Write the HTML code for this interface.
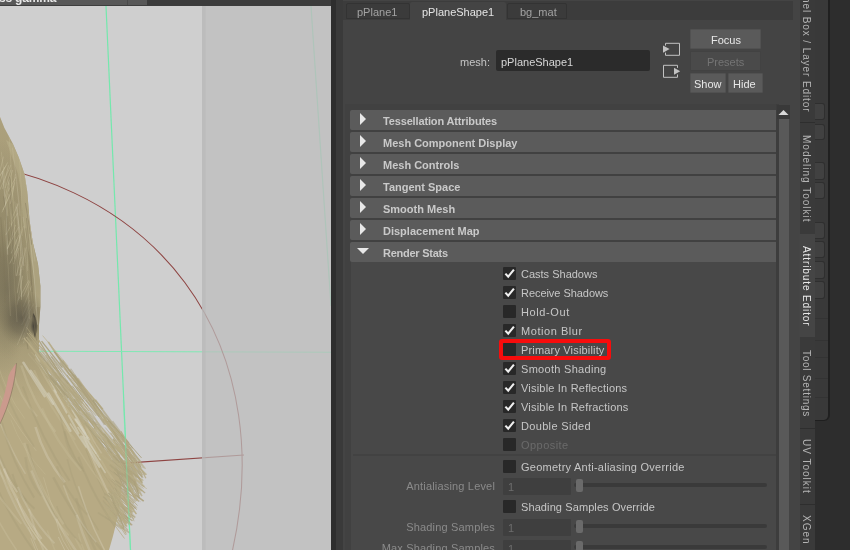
<!DOCTYPE html>
<html><head><meta charset="utf-8">
<style>
*{margin:0;padding:0;box-sizing:border-box}
html,body{width:850px;height:550px;overflow:hidden;background:#444;font-family:"Liberation Sans",sans-serif}
.a{position:absolute}
.t,.cl,.hdr .lab,.vt{filter:grayscale(1)}
.t{position:absolute;white-space:nowrap;font-size:11px;line-height:13px}
.hdr{position:absolute;left:350px;width:426px;height:20px;background:#5b5b5b;border-radius:2px 0 0 2px}
.hdr .tri{position:absolute;left:10px;top:3px;width:0;height:0;border-top:6px solid transparent;border-bottom:6px solid transparent;border-left:6.5px solid #e8e8e8}
.hdr .tri.dn{left:7px;top:6px;border-left:6px solid transparent;border-right:6px solid transparent;border-top:6px solid #e8e8e8;border-bottom:0}
.hdr .lab{position:absolute;left:33px;top:5px;font-size:11px;line-height:13px;font-weight:bold;color:#c9c9c9;white-space:nowrap}
.cb{position:absolute;left:503px;width:13px;height:13px;background:#282828;border-radius:1px}
.cb svg{position:absolute;left:0;top:0}
.cl{position:absolute;left:521px;font-size:11px;line-height:13px;color:#c6c6c6;white-space:nowrap}
.vt{position:absolute;left:799px;width:15px;writing-mode:vertical-rl;font-size:10px;line-height:15px;color:#b4b4b4;white-space:nowrap;overflow:hidden}
.nt{position:absolute;left:815px;width:10px;background:#414141;border:1px solid #2f2f2f;border-left:0;border-radius:0 3px 3px 0}
</style></head><body>
<div class="a" style="left:0;top:0;width:331px;height:550px;background:#cfcfcf;overflow:hidden">
    <div class="a" style="left:0;top:0;width:331px;height:6px;background:#3c3c3c"></div>
  <div class="a" style="left:0;top:0;width:147px;height:5px;background:#585858"></div>
  <div class="a" style="left:127px;top:0;width:1px;height:5px;background:#4a4a4a"></div>
  <div class="a" style="left:0;top:5px;width:147px;height:1px;background:#3e3e3e"></div>
  <div class="t" style="left:-1px;top:-8px;font-size:12px;font-weight:bold;color:#e8e8e8;letter-spacing:-0.2px">ss gamma</div>
  <svg class="a" style="left:0;top:0" width="331" height="550" viewBox="0 0 331 550">


    <line x1="311" y1="6" x2="331" y2="306" stroke="#6fdca6" stroke-width="1.2" opacity="0.7"/>
    <line x1="106" y1="6" x2="130.5" y2="550" stroke="#74e8ad" stroke-width="1.2"/>
    <line x1="39" y1="351.3" x2="331" y2="352.3" stroke="#80e8b4" stroke-width="1.1"/>
    <ellipse cx="-224.67" cy="586.25" rx="375.89" ry="509.85" transform="rotate(53.467 -224.67 586.25)" fill="none" stroke="#8e4442" stroke-width="1.05"/>
    <line x1="122" y1="463.3" x2="244" y2="455" stroke="#8e4442" stroke-width="1.2"/>
<defs>
<linearGradient id="hgT" gradientUnits="userSpaceOnUse" x1="0" y1="120" x2="30" y2="400"><stop offset="0" stop-color="#938a6a" stop-opacity="0.3"/><stop offset="0.6" stop-color="#938a6a" stop-opacity="0.75"/><stop offset="0.8" stop-color="#938a6a" stop-opacity="0.45"/><stop offset="1" stop-color="#938a6a" stop-opacity="0"/></linearGradient>
<linearGradient id="hgL" gradientUnits="userSpaceOnUse" x1="0" y1="0" x2="40" y2="0"><stop offset="0" stop-color="#8a8163" stop-opacity="0.6"/><stop offset="1" stop-color="#8a8163" stop-opacity="0"/></linearGradient>
<radialGradient id="dk" cx="0.5" cy="0.5" r="0.5"><stop offset="0" stop-color="#46423a"/><stop offset="0.5" stop-color="#5f5948" stop-opacity="0.8"/><stop offset="1" stop-color="#7d7559" stop-opacity="0"/></radialGradient>
<clipPath id="mc"><path d="M0.0 117.0 L4.4 128.0 L13.0 144.0 L18.6 157.0 L24.5 174.0 L27.3 192.0 L29.5 220.0 L32.7 242.0 L38.0 264.0 L40.4 286.0 L40.4 307.0 L39.0 325.0 L39.0 352.0 L49.0 374.0 L65.0 396.0 L81.0 418.0 L99.0 440.0 L111.0 458.0 L118.0 470.0 L122.0 482.0 L121.0 496.0 L119.0 509.0 L116.0 524.0 L113.0 536.0 L109.0 550.0 L0.0 550.0 Z"/></clipPath>
</defs>
<path d="M0.0 117.0 L4.4 128.0 L13.0 144.0 L18.6 157.0 L24.5 174.0 L27.3 192.0 L29.5 220.0 L32.7 242.0 L38.0 264.0 L40.4 286.0 L40.4 307.0 L39.0 325.0 L39.0 352.0 L49.0 374.0 L65.0 396.0 L81.0 418.0 L99.0 440.0 L111.0 458.0 L118.0 470.0 L122.0 482.0 L121.0 496.0 L119.0 509.0 L116.0 524.0 L113.0 536.0 L109.0 550.0 L0.0 550.0 Z" fill="#b7aa84"/>
<g clip-path="url(#mc)">
<rect x="0" y="100" width="60" height="320" fill="url(#hgT)"/>
<radialGradient id="lg" cx="0.5" cy="0.5" r="0.5"><stop offset="0" stop-color="#877e60" stop-opacity="0.75"/><stop offset="1" stop-color="#877e60" stop-opacity="0"/></radialGradient>
<ellipse cx="0" cy="260" rx="34" ry="120" fill="url(#lg)"/>
<ellipse cx="8" cy="290" rx="22" ry="70" fill="url(#dk)" opacity="0.3"/>
<path d="M13 144 L18.6 157 L24.5 174 L27.3 192 L29.5 220 L32.7 242 L38 264 L40.4 286 L40.4 307 L36 307 L35 286 L32 264 L26 242 L23 220 L21 192 L18 174 L12 157 L6 140 Z" fill="#c6bc98" opacity="0.35"/>
<path d="M18.7 226.9 L7.3 248.4" stroke="#d2c9aa" stroke-width="0.8" opacity="0.4"/>
<path d="M19.9 236.3 L14.4 258.5" stroke="#d2c9aa" stroke-width="0.8" opacity="0.4"/>
<path d="M21.2 257.1 L16.4 275.9" stroke="#d2c9aa" stroke-width="0.8" opacity="0.4"/>
<path d="M6.3 165.4 L-3.2 180.1" stroke="#d2c9aa" stroke-width="0.8" opacity="0.4"/>
<path d="M28.4 317.0 L19.1 340.8" stroke="#d2c9aa" stroke-width="0.8" opacity="0.4"/>
<path d="M16.1 176.8 L7.9 191.7" stroke="#d2c9aa" stroke-width="0.8" opacity="0.4"/>
<path d="M14.7 182.3 L10.5 203.8" stroke="#d2c9aa" stroke-width="0.8" opacity="0.4"/>
<path d="M15.5 224.9 L7.4 249.1" stroke="#d2c9aa" stroke-width="0.8" opacity="0.4"/>
<path d="M18.9 235.0 L11.3 253.4" stroke="#d2c9aa" stroke-width="0.8" opacity="0.4"/>
<path d="M28.0 319.6 L17.3 344.9" stroke="#d2c9aa" stroke-width="0.8" opacity="0.4"/>
<path d="M18.2 203.6 L11.9 218.7" stroke="#d2c9aa" stroke-width="0.8" opacity="0.4"/>
<path d="M28.8 280.3 L18.0 300.5" stroke="#d2c9aa" stroke-width="0.8" opacity="0.4"/>
<path d="M29.5 312.9 L25.5 330.2" stroke="#d2c9aa" stroke-width="0.8" opacity="0.4"/>
<path d="M33.3 304.7 L21.5 325.1" stroke="#d2c9aa" stroke-width="0.8" opacity="0.4"/>
<path d="M7.7 162.4 L-2.6 180.7" stroke="#d2c9aa" stroke-width="0.8" opacity="0.4"/>
<path d="M11.0 164.8 L-0.7 190.9" stroke="#d2c9aa" stroke-width="0.8" opacity="0.4"/>
<path d="M12.7 170.1 L7.9 185.0" stroke="#d2c9aa" stroke-width="0.8" opacity="0.4"/>
<path d="M31.9 285.5 L23.4 306.7" stroke="#d2c9aa" stroke-width="0.8" opacity="0.4"/>
<path d="M9.8 182.4 L4.8 206.7" stroke="#d2c9aa" stroke-width="0.8" opacity="0.4"/>
<path d="M10.9 169.8 L5.2 188.1" stroke="#d2c9aa" stroke-width="0.8" opacity="0.4"/>
<path d="M30.0 315.1 L23.5 343.2" stroke="#d2c9aa" stroke-width="0.8" opacity="0.4"/>
<path d="M13.7 185.8 L2.9 210.1" stroke="#d2c9aa" stroke-width="0.8" opacity="0.4"/>
<path d="M4.8 167.1 L-0.9 185.2" stroke="#d2c9aa" stroke-width="0.8" opacity="0.4"/>
<path d="M29.7 281.4 L23.3 296.5" stroke="#d2c9aa" stroke-width="0.8" opacity="0.4"/>
<path d="M8.6 165.3 L2.6 188.9" stroke="#d2c9aa" stroke-width="0.8" opacity="0.4"/>
<path d="M17.5 213.2 L5.9 234.9" stroke="#d2c9aa" stroke-width="0.8" opacity="0.4"/>
<path d="M18.9 247.7 L13.5 264.1" stroke="#d2c9aa" stroke-width="0.8" opacity="0.4"/>
<path d="M29.8 304.4 L23.8 321.5" stroke="#d2c9aa" stroke-width="0.8" opacity="0.4"/>
<path d="M22.7 275.7 L17.1 304.9" stroke="#d2c9aa" stroke-width="0.8" opacity="0.4"/>
<path d="M29.9 300.0 L22.5 315.6" stroke="#d2c9aa" stroke-width="0.8" opacity="0.4"/>
<path d="M3.4 156.6 L-2.5 181.9" stroke="#d2c9aa" stroke-width="0.8" opacity="0.4"/>
<path d="M10.7 193.7 L1.9 212.4" stroke="#d2c9aa" stroke-width="0.8" opacity="0.4"/>
<path d="M9.5 179.8 L5.0 197.5" stroke="#d2c9aa" stroke-width="0.8" opacity="0.4"/>
<path d="M18.7 245.1 L9.7 263.6" stroke="#d2c9aa" stroke-width="0.8" opacity="0.4"/>
<path d="M36.0 306.0 L31.8 324.3" stroke="#d2c9aa" stroke-width="0.8" opacity="0.4"/>
<path d="M23.5 225.8 L18.1 245.7" stroke="#d2c9aa" stroke-width="0.8" opacity="0.4"/>
<path d="M26.2 247.3 L19.3 275.5" stroke="#d2c9aa" stroke-width="0.8" opacity="0.4"/>
<path d="M31.4 316.7 L21.9 340.0" stroke="#d2c9aa" stroke-width="0.8" opacity="0.4"/>
<path d="M15.4 173.9 L11.3 202.4" stroke="#d2c9aa" stroke-width="0.8" opacity="0.4"/>
<path d="M21.4 269.2 L17.2 293.3" stroke="#d2c9aa" stroke-width="0.8" opacity="0.4"/>
<ellipse cx="22" cy="318" rx="24" ry="30" fill="url(#dk)" opacity="0.6"/>
<path d="M33 313 C 37 318, 38 328, 35 338 C 33 332, 32 322, 33 313 Z" fill="#3e3b33" opacity="0.8"/>
<ellipse cx="34" cy="326" rx="4.5" ry="10" fill="url(#dk)"/>
<path d="M11.9 213.6 Q 16.9 244.8 18.0 275.9" stroke="#cdc5a6" stroke-width="0.6" fill="none" opacity="0.35"/>
<path d="M7.9 121.0 Q 12.9 173.8 11.8 226.5" stroke="#c2b996" stroke-width="1.0" fill="none" opacity="0.35"/>
<path d="M28.7 161.1 Q 33.7 184.1 37.8 207.1" stroke="#d8d1b8" stroke-width="0.6" fill="none" opacity="0.35"/>
<path d="M9.6 221.7 Q 14.6 271.9 17.0 322.2" stroke="#c2b996" stroke-width="0.6" fill="none" opacity="0.35"/>
<path d="M8.4 193.7 Q 13.4 235.0 15.9 276.3" stroke="#cdc5a6" stroke-width="0.6" fill="none" opacity="0.35"/>
<path d="M29.8 233.8 Q 34.8 279.3 37.6 324.7" stroke="#d8d1b8" stroke-width="1.0" fill="none" opacity="0.35"/>
<path d="M11.0 177.5 Q 16.0 216.4 14.2 255.3" stroke="#c2b996" stroke-width="1.0" fill="none" opacity="0.35"/>
<path d="M16.0 179.9 Q 21.0 208.0 22.5 236.0" stroke="#c2b996" stroke-width="0.6" fill="none" opacity="0.35"/>
<path d="M16.5 239.3 Q 21.5 268.2 21.6 297.2" stroke="#cdc5a6" stroke-width="0.8" fill="none" opacity="0.35"/>
<path d="M18.7 142.3 Q 23.7 168.3 28.2 194.2" stroke="#d8d1b8" stroke-width="1.0" fill="none" opacity="0.35"/>
<path d="M12.4 147.6 Q 17.4 181.8 19.9 215.9" stroke="#d8d1b8" stroke-width="0.6" fill="none" opacity="0.35"/>
<path d="M23.1 216.9 Q 28.1 243.9 27.7 270.9" stroke="#cdc5a6" stroke-width="0.8" fill="none" opacity="0.35"/>
<path d="M27.2 143.3 Q 32.2 168.0 35.2 192.8" stroke="#d8d1b8" stroke-width="0.6" fill="none" opacity="0.35"/>
<path d="M28.3 152.4 Q 33.3 178.3 33.2 204.2" stroke="#d8d1b8" stroke-width="0.8" fill="none" opacity="0.35"/>
<path d="M2.5 170.9 Q 7.5 212.8 7.7 254.7" stroke="#d8d1b8" stroke-width="1.0" fill="none" opacity="0.35"/>
<path d="M24.4 247.6 Q 29.4 283.4 29.3 319.2" stroke="#cdc5a6" stroke-width="0.6" fill="none" opacity="0.35"/>
<path d="M16.3 206.6 Q 21.3 236.4 23.8 266.2" stroke="#d8d1b8" stroke-width="0.8" fill="none" opacity="0.35"/>
<path d="M14.7 201.5 Q 19.7 235.7 23.1 269.9" stroke="#cdc5a6" stroke-width="0.6" fill="none" opacity="0.35"/>
<path d="M4.3 220.2 Q 9.3 268.1 10.4 316.0" stroke="#c2b996" stroke-width="0.6" fill="none" opacity="0.35"/>
<path d="M17.0 203.4 Q 22.0 251.7 21.4 299.9" stroke="#cdc5a6" stroke-width="1.0" fill="none" opacity="0.35"/>
<path d="M23.8 149.6 Q 28.8 194.6 31.8 239.6" stroke="#d8d1b8" stroke-width="1.0" fill="none" opacity="0.35"/>
<path d="M1.3 151.8 Q 6.3 183.9 7.8 216.0" stroke="#c2b996" stroke-width="1.0" fill="none" opacity="0.35"/>
<path d="M29.9 136.5 Q 34.9 186.2 33.5 235.9" stroke="#c2b996" stroke-width="0.6" fill="none" opacity="0.35"/>
<path d="M27.6 212.5 Q 32.6 237.1 35.0 261.6" stroke="#d8d1b8" stroke-width="0.6" fill="none" opacity="0.35"/>
<path d="M26.8 165.9 Q 31.8 205.8 33.1 245.7" stroke="#c2b996" stroke-width="0.8" fill="none" opacity="0.35"/>
<path d="M17.8 142.7 Q 22.8 187.9 21.7 233.2" stroke="#c2b996" stroke-width="1.0" fill="none" opacity="0.35"/>
<path d="M3.5 196.3 Q 7.5 218.5 8.3 240.7" stroke="#7f7659" stroke-width="0.8" fill="none" opacity="0.5"/>
<path d="M29.2 288.5 Q 33.2 315.0 36.5 341.6" stroke="#7f7659" stroke-width="0.8" fill="none" opacity="0.5"/>
<path d="M-4.5 215.8 Q -0.5 236.7 0.6 257.7" stroke="#7f7659" stroke-width="0.8" fill="none" opacity="0.5"/>
<path d="M9.7 176.8 Q 13.7 219.8 14.1 262.8" stroke="#7f7659" stroke-width="0.8" fill="none" opacity="0.5"/>
<path d="M25.4 202.9 Q 29.4 223.8 31.6 244.7" stroke="#7f7659" stroke-width="0.8" fill="none" opacity="0.5"/>
<path d="M19.0 285.7 Q 23.0 317.5 28.0 349.2" stroke="#7f7659" stroke-width="0.8" fill="none" opacity="0.5"/>
<path d="M26.5 218.1 Q 30.5 255.0 32.2 292.0" stroke="#7f7659" stroke-width="0.8" fill="none" opacity="0.5"/>
<path d="M25.8 228.4 Q 29.8 265.6 33.3 302.9" stroke="#7f7659" stroke-width="0.8" fill="none" opacity="0.5"/>
<path d="M10.4 225.0 Q 14.4 265.8 16.7 306.5" stroke="#7f7659" stroke-width="0.8" fill="none" opacity="0.5"/>
<path d="M0.8 217.4 Q 4.8 260.1 5.3 302.8" stroke="#7f7659" stroke-width="0.8" fill="none" opacity="0.5"/>
<path d="M47.3 530.5 Q 64.2 578.4 93.2 620.3" stroke="#c9bf9c" stroke-width="1.5" fill="none" opacity="0.3"/>
<path d="M85.9 440.1 Q 101.4 476.9 128.8 507.7" stroke="#a59a76" stroke-width="1.0" fill="none" opacity="0.3"/>
<path d="M25.4 457.1 Q 27.4 479.5 41.4 495.9" stroke="#a59a76" stroke-width="2.5" fill="none" opacity="0.3"/>
<path d="M30.7 537.8 Q 38.2 560.9 57.7 578.1" stroke="#d8d1b8" stroke-width="1.0" fill="none" opacity="0.3"/>
<path d="M81.0 426.4 Q 96.7 476.9 124.5 521.4" stroke="#e0dac6" stroke-width="2.0" fill="none" opacity="0.3"/>
<path d="M-8.0 433.5 Q -1.4 465.8 17.2 492.1" stroke="#e0dac6" stroke-width="2.0" fill="none" opacity="0.3"/>
<path d="M-25.9 418.1 Q -20.9 439.0 -3.8 453.9" stroke="#a39873" stroke-width="1.0" fill="none" opacity="0.3"/>
<path d="M-35.4 362.7 Q -30.8 383.1 -14.2 397.5" stroke="#a39873" stroke-width="2.0" fill="none" opacity="0.3"/>
<path d="M-8.2 434.8 Q 3.1 471.0 26.3 501.3" stroke="#a59a76" stroke-width="2.0" fill="none" opacity="0.3"/>
<path d="M53.3 477.3 Q 76.2 522.0 111.1 560.7" stroke="#a39873" stroke-width="2.5" fill="none" opacity="0.3"/>
<path d="M67.3 459.3 Q 76.9 497.9 98.6 530.4" stroke="#a59a76" stroke-width="1.5" fill="none" opacity="0.3"/>
<path d="M28.9 508.8 Q 39.6 549.6 62.4 584.5" stroke="#d8d1b8" stroke-width="2.0" fill="none" opacity="0.3"/>
<path d="M77.3 396.3 Q 83.5 427.9 101.6 453.4" stroke="#d8d1b8" stroke-width="1.5" fill="none" opacity="0.3"/>
<path d="M75.4 358.1 Q 81.6 386.7 99.9 409.3" stroke="#c9bf9c" stroke-width="2.5" fill="none" opacity="0.3"/>
<path d="M-27.4 504.8 Q -18.8 539.3 1.7 567.9" stroke="#d8d1b8" stroke-width="1.5" fill="none" opacity="0.3"/>
<path d="M12.4 473.9 Q 17.4 494.3 34.5 508.7" stroke="#a39873" stroke-width="2.0" fill="none" opacity="0.3"/>
<path d="M78.5 533.4 Q 83.9 557.5 101.4 575.6" stroke="#c9bf9c" stroke-width="1.5" fill="none" opacity="0.3"/>
<path d="M64.4 431.2 Q 67.2 453.1 82.1 469.0" stroke="#a59a76" stroke-width="2.5" fill="none" opacity="0.3"/>
<path d="M-20.9 368.8 Q -15.9 396.5 1.2 418.3" stroke="#c9bf9c" stroke-width="1.0" fill="none" opacity="0.3"/>
<path d="M35.4 358.2 Q 53.9 397.6 84.4 430.9" stroke="#cfc6a6" stroke-width="2.0" fill="none" opacity="0.3"/>
<path d="M10.8 419.6 Q 22.1 450.0 45.4 474.4" stroke="#c9bf9c" stroke-width="1.0" fill="none" opacity="0.3"/>
<path d="M42.4 338.6 Q 49.8 365.0 69.2 385.5" stroke="#c9bf9c" stroke-width="2.0" fill="none" opacity="0.3"/>
<path d="M12.7 371.0 Q 18.9 396.7 37.2 416.4" stroke="#cfc6a6" stroke-width="2.0" fill="none" opacity="0.3"/>
<path d="M76.1 498.4 Q 88.1 542.2 112.2 580.1" stroke="#a39873" stroke-width="2.5" fill="none" opacity="0.3"/>
<path d="M34.1 370.1 Q 48.6 407.9 75.2 439.8" stroke="#c9bf9c" stroke-width="2.0" fill="none" opacity="0.3"/>
<path d="M78.5 486.3 Q 92.0 532.3 117.5 572.3" stroke="#e0dac6" stroke-width="1.5" fill="none" opacity="0.3"/>
<path d="M76.6 514.8 Q 89.3 557.9 114.0 595.1" stroke="#d8d1b8" stroke-width="2.5" fill="none" opacity="0.3"/>
<path d="M-13.1 368.8 Q 5.6 412.8 36.3 450.9" stroke="#cfc6a6" stroke-width="1.0" fill="none" opacity="0.3"/>
<path d="M75.4 538.0 Q 98.6 583.6 133.7 623.2" stroke="#c9bf9c" stroke-width="2.0" fill="none" opacity="0.3"/>
<path d="M3.9 468.5 Q 16.7 506.8 41.5 539.0" stroke="#e0dac6" stroke-width="2.5" fill="none" opacity="0.3"/>
<path d="M43.5 477.3 Q 55.2 523.4 78.8 563.6" stroke="#cfc6a6" stroke-width="1.0" fill="none" opacity="0.3"/>
<path d="M40.0 485.1 Q 48.4 513.3 68.8 535.5" stroke="#cfc6a6" stroke-width="1.5" fill="none" opacity="0.3"/>
<path d="M44.2 332.3 Q 53.4 360.1 74.5 381.8" stroke="#c9bf9c" stroke-width="2.5" fill="none" opacity="0.3"/>
<path d="M85.7 449.3 Q 104.4 501.3 135.0 547.2" stroke="#a39873" stroke-width="1.0" fill="none" opacity="0.3"/>
<path d="M31.4 470.4 Q 52.1 519.7 84.8 562.9" stroke="#d8d1b8" stroke-width="2.5" fill="none" opacity="0.3"/>
<path d="M21.3 365.5 Q 32.3 401.8 55.3 432.0" stroke="#cfc6a6" stroke-width="2.5" fill="none" opacity="0.3"/>
<path d="M82.9 418.3 Q 94.5 455.5 118.1 486.7" stroke="#c9bf9c" stroke-width="2.0" fill="none" opacity="0.3"/>
<path d="M22.8 386.6 Q 40.2 436.7 69.5 480.8" stroke="#a39873" stroke-width="2.0" fill="none" opacity="0.3"/>
<path d="M-36.5 492.2 Q -24.3 531.4 -0.0 564.5" stroke="#e0dac6" stroke-width="2.5" fill="none" opacity="0.3"/>
<path d="M-33.1 396.2 Q -23.5 429.3 -1.9 456.4" stroke="#a39873" stroke-width="2.0" fill="none" opacity="0.3"/>
<path d="M-30.4 520.2 Q -19.6 553.9 3.3 581.6" stroke="#d8d1b8" stroke-width="1.0" fill="none" opacity="0.3"/>
<path d="M28.0 526.8 Q 43.9 569.5 71.8 606.1" stroke="#d8d1b8" stroke-width="1.0" fill="none" opacity="0.3"/>
<path d="M-33.4 417.6 Q -29.7 442.7 -14.0 461.8" stroke="#c9bf9c" stroke-width="1.5" fill="none" opacity="0.3"/>
<path d="M-23.8 423.0 Q -8.8 463.9 18.3 498.8" stroke="#c9bf9c" stroke-width="2.5" fill="none" opacity="0.3"/>
<path d="M7.3 486.2 Q 27.9 529.8 60.5 567.4" stroke="#c9bf9c" stroke-width="1.5" fill="none" opacity="0.3"/>
<path d="M-9.0 353.9 Q 6.5 403.4 34.0 446.9" stroke="#a59a76" stroke-width="2.0" fill="none" opacity="0.3"/>
<path d="M-4.3 458.1 Q 9.5 501.9 35.4 539.7" stroke="#d8d1b8" stroke-width="2.0" fill="none" opacity="0.3"/>
<path d="M57.9 369.9 Q 62.8 399.4 79.7 423.0" stroke="#d8d1b8" stroke-width="1.0" fill="none" opacity="0.3"/>
<path d="M41.7 332.0 Q 52.2 358.9 74.8 379.8" stroke="#cfc6a6" stroke-width="1.0" fill="none" opacity="0.3"/>
<path d="M-11.1 388.4 Q 1.2 434.2 25.4 473.9" stroke="#d8d1b8" stroke-width="1.5" fill="none" opacity="0.3"/>
<path d="M42.0 408.4 Q 55.7 442.4 81.3 470.5" stroke="#c9bf9c" stroke-width="2.5" fill="none" opacity="0.3"/>
<path d="M56.8 506.1 Q 63.3 528.0 81.7 543.8" stroke="#a59a76" stroke-width="1.5" fill="none" opacity="0.3"/>
<path d="M17.8 486.9 Q 30.1 518.1 54.5 543.4" stroke="#d8d1b8" stroke-width="2.0" fill="none" opacity="0.3"/>
<path d="M-2.2 489.4 Q 18.2 533.6 50.5 571.8" stroke="#a39873" stroke-width="2.0" fill="none" opacity="0.3"/>
<path d="M35.5 427.0 Q 44.2 457.7 64.8 482.4" stroke="#e0dac6" stroke-width="2.5" fill="none" opacity="0.3"/>
<path d="M66.0 427.3 Q 87.9 470.4 121.8 507.4" stroke="#c9bf9c" stroke-width="1.5" fill="none" opacity="0.3"/>
<path d="M78.4 456.8 Q 93.6 498.7 120.8 534.6" stroke="#a39873" stroke-width="2.0" fill="none" opacity="0.3"/>
<path d="M-3.2 360.0 Q 4.8 392.4 24.8 418.7" stroke="#c9bf9c" stroke-width="1.0" fill="none" opacity="0.3"/>
<path d="M1.9 422.6 Q 12.0 463.1 34.2 497.6" stroke="#a39873" stroke-width="2.0" fill="none" opacity="0.3"/>
<path d="M16.9 498.6 Q 26.7 528.0 48.4 551.3" stroke="#e0dac6" stroke-width="1.5" fill="none" opacity="0.3"/>
<path d="M-29.0 504.0 Q -25.8 525.7 -10.6 541.4" stroke="#a59a76" stroke-width="2.5" fill="none" opacity="0.3"/>
<path d="M63.5 485.2 Q 73.9 516.7 96.3 542.2" stroke="#d8d1b8" stroke-width="1.5" fill="none" opacity="0.3"/>
<path d="M-17.0 489.4 Q 3.4 535.8 35.8 576.2" stroke="#cfc6a6" stroke-width="1.5" fill="none" opacity="0.3"/>
<path d="M27.0 444.3 Q 36.2 484.1 57.5 518.0" stroke="#a39873" stroke-width="2.5" fill="none" opacity="0.3"/>
<path d="M-31.7 444.8 Q -11.1 487.3 21.4 523.8" stroke="#cfc6a6" stroke-width="2.0" fill="none" opacity="0.3"/>
<path d="M55.8 518.8 Q 60.2 542.3 76.5 559.8" stroke="#d8d1b8" stroke-width="1.0" fill="none" opacity="0.3"/>
<path d="M57.0 466.3 Q 66.2 493.5 87.4 514.7" stroke="#a59a76" stroke-width="2.0" fill="none" opacity="0.3"/>
<path d="M59.4 412.8 Q 65.5 445.2 83.7 471.7" stroke="#a39873" stroke-width="1.5" fill="none" opacity="0.3"/>
<path d="M24.2 442.8 Q 37.9 486.6 63.5 524.3" stroke="#cfc6a6" stroke-width="2.5" fill="none" opacity="0.3"/>
<path d="M58.4 537.0 Q 70.9 566.4 95.3 589.8" stroke="#e0dac6" stroke-width="1.0" fill="none" opacity="0.3"/>
<path d="M81.1 436.6 L99.4 466.7" stroke="#d6d1c0" stroke-width="2.5" stroke-linecap="round" fill="none" opacity="0.55"/>
<path d="M35.7 354.7 L56.3 392.4" stroke="#d6d1c0" stroke-width="1.5" stroke-linecap="round" fill="none" opacity="0.55"/>
<path d="M70.3 423.8 L86.0 447.2" stroke="#d6d1c0" stroke-width="1.5" stroke-linecap="round" fill="none" opacity="0.55"/>
<path d="M54.3 390.3 L66.6 412.6" stroke="#d6d1c0" stroke-width="2" stroke-linecap="round" fill="none" opacity="0.55"/>
<path d="M56.2 381.0 L73.7 411.8" stroke="#d6d1c0" stroke-width="1.5" stroke-linecap="round" fill="none" opacity="0.55"/>
<path d="M86.4 437.5 L96.1 453.3" stroke="#d6d1c0" stroke-width="1.5" stroke-linecap="round" fill="none" opacity="0.55"/>
<path d="M55.0 381.8 L69.2 405.5" stroke="#d6d1c0" stroke-width="2.5" stroke-linecap="round" fill="none" opacity="0.55"/>
<path d="M75.8 419.5 L89.1 439.5" stroke="#d6d1c0" stroke-width="2" stroke-linecap="round" fill="none" opacity="0.55"/>
<path d="M48.4 393.5 L70.4 430.8" stroke="#d6d1c0" stroke-width="2.5" stroke-linecap="round" fill="none" opacity="0.55"/>
<path d="M65.4 396.8 L85.5 433.6" stroke="#d6d1c0" stroke-width="2" stroke-linecap="round" fill="none" opacity="0.55"/>
<path d="M68.7 415.5 L78.6 433.4" stroke="#d6d1c0" stroke-width="2" stroke-linecap="round" fill="none" opacity="0.55"/>
<path d="M23.4 362.7 L44.6 396.2" stroke="#d6d1c0" stroke-width="2.5" stroke-linecap="round" fill="none" opacity="0.55"/>
<path d="M77.9 427.3 L100.2 459.6" stroke="#d6d1c0" stroke-width="1.5" stroke-linecap="round" fill="none" opacity="0.55"/>
<path d="M82.8 436.4 L105.2 472.5" stroke="#d6d1c0" stroke-width="1.5" stroke-linecap="round" fill="none" opacity="0.55"/>
<path d="M75.3 419.2 L87.7 437.7" stroke="#d6d1c0" stroke-width="2" stroke-linecap="round" fill="none" opacity="0.55"/>
<path d="M30.6 370.8 L53.0 403.9" stroke="#d6d1c0" stroke-width="2.5" stroke-linecap="round" fill="none" opacity="0.55"/>
</g>
<path d="M111.9 500.5 L134.9 517.3" stroke="#a99f7c" stroke-width="1.0" fill="none" opacity="0.87"/>
<path d="M85.4 399.6 L99.4 416.8" stroke="#a99f7c" stroke-width="1.6" fill="none" opacity="0.81"/>
<path d="M58.1 377.1 L80.3 410.7" stroke="#b3a883" stroke-width="1.6" fill="none" opacity="0.59"/>
<path d="M56.4 376.0 L79.7 402.2" stroke="#b8ad88" stroke-width="1.0" fill="none" opacity="0.93"/>
<path d="M112.6 421.2 L132.7 448.4" stroke="#a99f7c" stroke-width="1.3" fill="none" opacity="0.53"/>
<path d="M74.3 374.7 L94.5 401.2" stroke="#a99f7c" stroke-width="1.6" fill="none" opacity="0.51"/>
<path d="M113.6 471.9 L133.7 489.9" stroke="#a99f7c" stroke-width="1.0" fill="none" opacity="0.91"/>
<path d="M65.3 388.8 L84.9 415.1" stroke="#b5aa85" stroke-width="1.6" fill="none" opacity="0.75"/>
<path d="M50.2 368.3 L65.2 390.0" stroke="#b5aa85" stroke-width="1.6" fill="none" opacity="0.83"/>
<path d="M115.4 445.8 L137.0 470.7" stroke="#b3a883" stroke-width="1.0" fill="none" opacity="0.58"/>
<path d="M114.9 461.2 L129.0 483.8" stroke="#a99f7c" stroke-width="1.0" fill="none" opacity="0.94"/>
<path d="M124.6 466.9 L131.0 481.9" stroke="#ada27e" stroke-width="1.0" fill="none" opacity="0.79"/>
<path d="M75.8 399.1 L96.5 424.9" stroke="#a99f7c" stroke-width="1.6" fill="none" opacity="0.78"/>
<path d="M116.1 443.8 L142.4 483.5" stroke="#a99f7c" stroke-width="1.3" fill="none" opacity="0.65"/>
<path d="M107.0 448.4 L127.9 476.6" stroke="#b5aa85" stroke-width="1.3" fill="none" opacity="0.87"/>
<path d="M110.0 512.1 L123.1 528.6" stroke="#b3a883" stroke-width="1.3" fill="none" opacity="0.78"/>
<path d="M119.8 479.5 L131.5 510.7" stroke="#b3a883" stroke-width="0.8" fill="none" opacity="0.78"/>
<path d="M97.3 423.9 L111.8 443.1" stroke="#b5aa85" stroke-width="1.3" fill="none" opacity="0.54"/>
<path d="M110.6 432.9 L141.7 473.4" stroke="#b3a883" stroke-width="0.8" fill="none" opacity="0.75"/>
<path d="M95.7 421.7 L120.8 460.3" stroke="#b3a883" stroke-width="0.8" fill="none" opacity="0.92"/>
<path d="M29.1 332.9 L61.9 372.5" stroke="#b3a883" stroke-width="1.0" fill="none" opacity="0.77"/>
<path d="M62.7 360.1 L81.7 388.0" stroke="#b3a883" stroke-width="1.3" fill="none" opacity="0.84"/>
<path d="M116.6 464.9 L132.0 492.1" stroke="#b8ad88" stroke-width="1.6" fill="none" opacity="0.51"/>
<path d="M112.0 490.5 L135.5 508.2" stroke="#b5aa85" stroke-width="1.0" fill="none" opacity="0.76"/>
<path d="M112.5 430.4 L139.6 469.4" stroke="#b8ad88" stroke-width="1.6" fill="none" opacity="0.77"/>
<path d="M121.6 465.8 L136.7 500.7" stroke="#b8ad88" stroke-width="1.3" fill="none" opacity="0.72"/>
<path d="M111.9 478.8 L137.5 505.5" stroke="#ada27e" stroke-width="0.8" fill="none" opacity="0.91"/>
<path d="M108.5 493.0 L127.8 513.6" stroke="#a99f7c" stroke-width="1.3" fill="none" opacity="0.83"/>
<path d="M119.0 465.5 L134.0 491.6" stroke="#ada27e" stroke-width="0.8" fill="none" opacity="0.61"/>
<path d="M121.9 465.3 L135.3 500.2" stroke="#a99f7c" stroke-width="1.0" fill="none" opacity="0.75"/>
<path d="M126.2 458.4 L139.1 493.7" stroke="#b5aa85" stroke-width="1.6" fill="none" opacity="0.75"/>
<path d="M71.0 372.0 L98.3 409.1" stroke="#a99f7c" stroke-width="1.0" fill="none" opacity="0.56"/>
<path d="M116.1 491.0 L135.7 508.6" stroke="#a99f7c" stroke-width="1.3" fill="none" opacity="0.58"/>
<path d="M111.0 480.9 L136.0 506.7" stroke="#ada27e" stroke-width="1.0" fill="none" opacity="0.52"/>
<path d="M31.6 352.2 L50.7 376.0" stroke="#b8ad88" stroke-width="1.0" fill="none" opacity="0.59"/>
<path d="M27.1 332.9 L57.8 371.6" stroke="#b3a883" stroke-width="1.0" fill="none" opacity="0.74"/>
<path d="M69.2 404.6 L102.9 442.7" stroke="#b5aa85" stroke-width="1.3" fill="none" opacity="0.89"/>
<path d="M62.1 377.5 L92.2 421.9" stroke="#b3a883" stroke-width="1.0" fill="none" opacity="0.89"/>
<path d="M55.5 380.6 L72.5 400.7" stroke="#b5aa85" stroke-width="1.3" fill="none" opacity="0.67"/>
<path d="M107.4 498.4 L130.7 517.4" stroke="#b3a883" stroke-width="1.0" fill="none" opacity="0.62"/>
<path d="M51.0 378.5 L62.9 397.0" stroke="#a99f7c" stroke-width="0.8" fill="none" opacity="0.77"/>
<path d="M99.3 437.2 L119.7 465.0" stroke="#b3a883" stroke-width="1.0" fill="none" opacity="0.58"/>
<path d="M115.2 480.3 L143.7 501.1" stroke="#ada27e" stroke-width="1.6" fill="none" opacity="0.91"/>
<path d="M102.9 500.5 L127.9 530.4" stroke="#ada27e" stroke-width="1.3" fill="none" opacity="0.64"/>
<path d="M121.7 477.0 L139.7 498.5" stroke="#ada27e" stroke-width="1.0" fill="none" opacity="0.77"/>
<path d="M66.6 379.9 L86.8 408.4" stroke="#b5aa85" stroke-width="1.0" fill="none" opacity="0.62"/>
<path d="M109.2 490.2 L128.3 513.0" stroke="#ada27e" stroke-width="0.8" fill="none" opacity="0.76"/>
<path d="M72.8 377.9 L96.9 411.2" stroke="#ada27e" stroke-width="1.6" fill="none" opacity="0.83"/>
<path d="M26.5 327.3 L57.3 369.1" stroke="#b3a883" stroke-width="1.0" fill="none" opacity="0.52"/>
<path d="M120.8 459.4 L133.9 478.0" stroke="#b5aa85" stroke-width="1.6" fill="none" opacity="0.54"/>
<path d="M118.8 489.0 L135.8 501.6" stroke="#ada27e" stroke-width="1.6" fill="none" opacity="0.53"/>
<path d="M125.0 454.8 L142.3 482.7" stroke="#b3a883" stroke-width="1.6" fill="none" opacity="0.84"/>
<path d="M115.0 513.4 L127.2 527.0" stroke="#a99f7c" stroke-width="0.8" fill="none" opacity="0.61"/>
<path d="M114.7 488.9 L133.2 505.5" stroke="#a99f7c" stroke-width="0.8" fill="none" opacity="0.81"/>
<path d="M111.3 505.3 L124.3 521.9" stroke="#b8ad88" stroke-width="0.8" fill="none" opacity="0.92"/>
<path d="M102.6 438.5 L131.5 483.3" stroke="#b3a883" stroke-width="1.6" fill="none" opacity="0.76"/>
<path d="M48.3 341.9 L69.8 375.1" stroke="#b3a883" stroke-width="1.6" fill="none" opacity="0.89"/>
<path d="M79.3 406.2 L109.6 442.6" stroke="#b3a883" stroke-width="1.0" fill="none" opacity="0.72"/>
<path d="M116.5 462.6 L136.2 480.6" stroke="#b3a883" stroke-width="1.6" fill="none" opacity="0.59"/>
<path d="M128.0 464.6 L139.8 474.9" stroke="#ada27e" stroke-width="0.8" fill="none" opacity="0.73"/>
<path d="M98.5 433.4 L121.5 465.6" stroke="#a99f7c" stroke-width="1.3" fill="none" opacity="0.53"/>
<path d="M107.4 450.5 L122.8 473.7" stroke="#b5aa85" stroke-width="1.6" fill="none" opacity="0.70"/>
<path d="M110.6 462.6 L132.6 489.5" stroke="#b8ad88" stroke-width="1.0" fill="none" opacity="0.72"/>
<path d="M76.1 405.2 L103.2 435.5" stroke="#b8ad88" stroke-width="1.6" fill="none" opacity="0.74"/>
<path d="M69.2 389.2 L93.6 419.5" stroke="#b8ad88" stroke-width="1.0" fill="none" opacity="0.90"/>
<path d="M104.3 432.5 L127.4 459.3" stroke="#b5aa85" stroke-width="1.0" fill="none" opacity="0.55"/>
<path d="M105.6 456.2 L123.5 476.4" stroke="#b8ad88" stroke-width="0.8" fill="none" opacity="0.86"/>
<path d="M113.0 439.3 L124.9 457.3" stroke="#b5aa85" stroke-width="0.8" fill="none" opacity="0.93"/>
<path d="M106.8 442.2 L134.3 473.8" stroke="#b8ad88" stroke-width="1.6" fill="none" opacity="0.53"/>
<path d="M120.6 473.1 L132.1 491.7" stroke="#b8ad88" stroke-width="1.0" fill="none" opacity="0.71"/>
<path d="M70.4 377.9 L97.3 413.8" stroke="#b8ad88" stroke-width="1.0" fill="none" opacity="0.72"/>
<path d="M97.3 439.8 L119.7 471.8" stroke="#b8ad88" stroke-width="0.8" fill="none" opacity="0.66"/>
<path d="M70.0 374.4 L88.0 397.2" stroke="#b5aa85" stroke-width="1.6" fill="none" opacity="0.82"/>
<path d="M102.5 432.6 L115.3 448.6" stroke="#b5aa85" stroke-width="1.3" fill="none" opacity="0.87"/>
<path d="M81.9 387.9 L102.5 413.7" stroke="#a99f7c" stroke-width="1.0" fill="none" opacity="0.85"/>
<path d="M35.5 352.1 L56.4 378.9" stroke="#b8ad88" stroke-width="1.6" fill="none" opacity="0.67"/>
<path d="M119.0 464.3 L130.5 478.1" stroke="#b5aa85" stroke-width="1.6" fill="none" opacity="0.94"/>
<path d="M69.9 399.2 L88.3 421.6" stroke="#ada27e" stroke-width="0.8" fill="none" opacity="0.92"/>
<path d="M123.9 452.3 L136.6 478.2" stroke="#a99f7c" stroke-width="1.3" fill="none" opacity="0.62"/>
<path d="M67.0 374.8 L84.4 399.8" stroke="#b3a883" stroke-width="1.0" fill="none" opacity="0.87"/>
<path d="M63.0 383.9 L87.6 420.4" stroke="#b8ad88" stroke-width="1.3" fill="none" opacity="0.67"/>
<path d="M114.5 487.6 L136.9 509.6" stroke="#ada27e" stroke-width="1.0" fill="none" opacity="0.89"/>
<path d="M60.1 362.4 L92.2 402.1" stroke="#ada27e" stroke-width="1.6" fill="none" opacity="0.52"/>
<path d="M98.0 512.8 L129.6 532.7" stroke="#ada27e" stroke-width="1.6" fill="none" opacity="0.61"/>
<path d="M105.8 420.6 L134.0 454.0" stroke="#b3a883" stroke-width="1.0" fill="none" opacity="0.76"/>
<path d="M121.8 471.1 L130.8 486.4" stroke="#b3a883" stroke-width="1.0" fill="none" opacity="0.59"/>
<path d="M104.8 516.6 L121.0 529.1" stroke="#ada27e" stroke-width="1.0" fill="none" opacity="0.62"/>
<path d="M109.2 420.6 L135.0 453.6" stroke="#b3a883" stroke-width="0.8" fill="none" opacity="0.57"/>
<path d="M64.5 379.4 L80.7 399.9" stroke="#a99f7c" stroke-width="1.6" fill="none" opacity="0.65"/>
<path d="M28.1 353.3 L60.4 391.4" stroke="#b8ad88" stroke-width="1.3" fill="none" opacity="0.60"/>
<path d="M117.2 504.9 L128.1 519.4" stroke="#b3a883" stroke-width="1.3" fill="none" opacity="0.86"/>
<path d="M73.5 375.5 L102.7 415.1" stroke="#b8ad88" stroke-width="1.6" fill="none" opacity="0.55"/>
<path d="M114.3 457.3 L131.8 480.3" stroke="#b8ad88" stroke-width="1.3" fill="none" opacity="0.64"/>
<path d="M45.9 375.5 L66.4 400.5" stroke="#a99f7c" stroke-width="0.8" fill="none" opacity="0.90"/>
<path d="M105.1 447.4 L117.2 462.5" stroke="#b3a883" stroke-width="1.6" fill="none" opacity="0.72"/>
<path d="M115.1 463.6 L132.9 486.7" stroke="#ada27e" stroke-width="1.3" fill="none" opacity="0.62"/>
<path d="M107.8 423.9 L141.3 467.5" stroke="#a99f7c" stroke-width="1.0" fill="none" opacity="0.89"/>
<path d="M59.7 394.1 L87.3 427.7" stroke="#ada27e" stroke-width="1.3" fill="none" opacity="0.53"/>
<path d="M120.6 476.2 L127.9 494.7" stroke="#ada27e" stroke-width="1.3" fill="none" opacity="0.86"/>
<path d="M123.4 466.4 L139.5 498.2" stroke="#a99f7c" stroke-width="1.6" fill="none" opacity="0.68"/>
<path d="M110.5 460.7 L143.4 480.5" stroke="#b3a883" stroke-width="1.3" fill="none" opacity="0.67"/>
<path d="M119.4 446.5 L134.9 471.2" stroke="#b8ad88" stroke-width="1.3" fill="none" opacity="0.64"/>
<path d="M59.0 381.6 L79.2 404.8" stroke="#b3a883" stroke-width="1.0" fill="none" opacity="0.52"/>
<path d="M61.0 393.2 L89.2 426.5" stroke="#b3a883" stroke-width="1.3" fill="none" opacity="0.66"/>
<path d="M110.7 466.6 L131.8 479.8" stroke="#ada27e" stroke-width="1.0" fill="none" opacity="0.51"/>
<path d="M72.4 374.1 L102.8 409.2" stroke="#b8ad88" stroke-width="1.6" fill="none" opacity="0.93"/>
<path d="M92.8 400.0 L118.7 439.6" stroke="#a99f7c" stroke-width="1.6" fill="none" opacity="0.93"/>
<path d="M102.2 453.2 L131.9 489.9" stroke="#b8ad88" stroke-width="0.8" fill="none" opacity="0.60"/>
<path d="M112.8 502.0 L126.3 524.2" stroke="#ada27e" stroke-width="0.8" fill="none" opacity="0.55"/>
<path d="M122.3 474.1 L134.3 498.1" stroke="#b8ad88" stroke-width="0.8" fill="none" opacity="0.73"/>
<path d="M28.9 353.1 L51.3 380.6" stroke="#a99f7c" stroke-width="1.3" fill="none" opacity="0.57"/>
<path d="M118.7 479.6 L130.9 496.9" stroke="#b8ad88" stroke-width="1.6" fill="none" opacity="0.52"/>
<path d="M62.8 393.3 L96.5 432.2" stroke="#b3a883" stroke-width="0.8" fill="none" opacity="0.86"/>
<path d="M110.4 496.3 L127.3 509.2" stroke="#b5aa85" stroke-width="1.3" fill="none" opacity="0.73"/>
<path d="M107.7 448.0 L128.9 480.1" stroke="#b5aa85" stroke-width="1.0" fill="none" opacity="0.53"/>
<path d="M111.4 487.8 L125.9 519.0" stroke="#b8ad88" stroke-width="0.8" fill="none" opacity="0.85"/>
<path d="M123.4 496.8 L129.6 511.8" stroke="#b3a883" stroke-width="0.8" fill="none" opacity="0.65"/>
<path d="M115.8 459.0 L136.1 477.0" stroke="#ada27e" stroke-width="1.6" fill="none" opacity="0.51"/>
<path d="M109.7 505.7 L132.5 520.8" stroke="#ada27e" stroke-width="1.3" fill="none" opacity="0.89"/>
<path d="M89.3 399.2 L123.3 442.4" stroke="#b5aa85" stroke-width="1.3" fill="none" opacity="0.80"/>
<path d="M99.6 417.8 L116.4 437.3" stroke="#b8ad88" stroke-width="0.8" fill="none" opacity="0.56"/>
<path d="M47.8 366.4 L66.3 392.0" stroke="#a99f7c" stroke-width="0.8" fill="none" opacity="0.81"/>
<path d="M99.1 456.7 L136.0 485.6" stroke="#b5aa85" stroke-width="1.6" fill="none" opacity="0.67"/>
<path d="M117.0 498.9 L133.9 519.2" stroke="#b5aa85" stroke-width="1.6" fill="none" opacity="0.61"/>
<path d="M123.8 496.9 L131.3 512.9" stroke="#a99f7c" stroke-width="1.6" fill="none" opacity="0.60"/>
<path d="M117.2 471.9 L137.1 499.4" stroke="#a99f7c" stroke-width="1.3" fill="none" opacity="0.69"/>
<path d="M105.2 427.5 L132.3 460.7" stroke="#a99f7c" stroke-width="1.0" fill="none" opacity="0.51"/>
<path d="M102.9 436.4 L135.6 476.1" stroke="#b5aa85" stroke-width="0.8" fill="none" opacity="0.87"/>
<path d="M106.6 499.7 L127.8 523.3" stroke="#b5aa85" stroke-width="0.8" fill="none" opacity="0.67"/>
<path d="M120.3 502.1 L129.9 523.5" stroke="#a99f7c" stroke-width="1.0" fill="none" opacity="0.71"/>
<path d="M113.4 439.2 L136.0 469.0" stroke="#a99f7c" stroke-width="1.0" fill="none" opacity="0.94"/>
<path d="M117.0 469.7 L129.7 485.8" stroke="#a99f7c" stroke-width="0.8" fill="none" opacity="0.95"/>
<path d="M117.0 461.0 L141.7 491.2" stroke="#b8ad88" stroke-width="1.3" fill="none" opacity="0.87"/>
<path d="M104.7 493.5 L133.1 512.2" stroke="#ada27e" stroke-width="1.3" fill="none" opacity="0.80"/>
<path d="M115.1 490.0 L126.7 503.2" stroke="#b5aa85" stroke-width="0.8" fill="none" opacity="0.55"/>
<path d="M119.5 464.2 L143.0 480.3" stroke="#b5aa85" stroke-width="0.8" fill="none" opacity="0.53"/>
<path d="M83.3 412.2 L96.8 430.1" stroke="#b3a883" stroke-width="1.0" fill="none" opacity="0.77"/>
<path d="M123.7 473.4 L137.1 488.4" stroke="#b8ad88" stroke-width="1.0" fill="none" opacity="0.88"/>
<path d="M59.2 373.1 L83.5 401.4" stroke="#b3a883" stroke-width="1.6" fill="none" opacity="0.78"/>
<path d="M63.5 368.4 L76.3 383.3" stroke="#b8ad88" stroke-width="1.0" fill="none" opacity="0.63"/>
<path d="M121.2 498.0 L134.1 509.6" stroke="#a99f7c" stroke-width="1.6" fill="none" opacity="0.69"/>
<path d="M46.9 360.4 L69.2 391.8" stroke="#b8ad88" stroke-width="1.0" fill="none" opacity="0.79"/>
<path d="M117.2 491.2 L136.1 513.7" stroke="#b8ad88" stroke-width="1.3" fill="none" opacity="0.62"/>
<path d="M112.1 502.8 L128.5 520.5" stroke="#b5aa85" stroke-width="1.6" fill="none" opacity="0.65"/>
<path d="M40.0 351.9 L72.5 388.8" stroke="#ada27e" stroke-width="1.3" fill="none" opacity="0.68"/>
<path d="M85.4 414.1 L115.2 447.7" stroke="#b3a883" stroke-width="1.6" fill="none" opacity="0.83"/>
<path d="M106.1 436.8 L142.2 477.0" stroke="#b3a883" stroke-width="1.3" fill="none" opacity="0.93"/>
<path d="M112.4 459.9 L125.6 483.1" stroke="#b3a883" stroke-width="1.6" fill="none" opacity="0.55"/>
<path d="M110.3 450.7 L124.6 468.1" stroke="#b8ad88" stroke-width="1.3" fill="none" opacity="0.68"/>
<path d="M104.6 442.7 L118.5 460.6" stroke="#b5aa85" stroke-width="1.3" fill="none" opacity="0.51"/>
<path d="M65.0 396.8 L92.7 435.5" stroke="#b8ad88" stroke-width="0.8" fill="none" opacity="0.68"/>
<path d="M40.7 367.1 L71.3 409.8" stroke="#b3a883" stroke-width="0.8" fill="none" opacity="0.87"/>
<path d="M127.9 466.1 L139.3 496.3" stroke="#a99f7c" stroke-width="1.0" fill="none" opacity="0.85"/>
<path d="M125.2 480.7 L134.2 496.4" stroke="#a99f7c" stroke-width="1.6" fill="none" opacity="0.64"/>
<path d="M59.4 361.7 L92.7 403.7" stroke="#a99f7c" stroke-width="0.8" fill="none" opacity="0.68"/>
<path d="M106.3 487.1 L137.3 507.9" stroke="#b3a883" stroke-width="0.8" fill="none" opacity="0.57"/>
<path d="M107.2 439.7 L119.6 455.8" stroke="#b8ad88" stroke-width="1.6" fill="none" opacity="0.70"/>
<path d="M124.2 460.2 L140.9 481.5" stroke="#ada27e" stroke-width="1.3" fill="none" opacity="0.59"/>
<path d="M116.4 444.5 L146.5 474.7" stroke="#b8ad88" stroke-width="1.6" fill="none" opacity="0.76"/>
<path d="M124.2 469.1 L143.7 491.7" stroke="#b5aa85" stroke-width="0.8" fill="none" opacity="0.81"/>
<path d="M84.7 422.8 L104.2 447.9" stroke="#a99f7c" stroke-width="1.3" fill="none" opacity="0.67"/>
<path d="M95.3 399.7 L119.9 433.1" stroke="#ada27e" stroke-width="1.6" fill="none" opacity="0.67"/>
<path d="M40.4 360.3 L70.8 395.3" stroke="#b3a883" stroke-width="0.8" fill="none" opacity="0.95"/>
<path d="M105.8 451.0 L130.2 481.5" stroke="#b5aa85" stroke-width="1.3" fill="none" opacity="0.54"/>
<path d="M72.1 385.6 L87.9 406.7" stroke="#a99f7c" stroke-width="1.0" fill="none" opacity="0.84"/>
<path d="M103.3 496.6 L132.2 525.2" stroke="#a99f7c" stroke-width="1.3" fill="none" opacity="0.77"/>
<path d="M108.0 420.7 L128.7 445.2" stroke="#b5aa85" stroke-width="1.3" fill="none" opacity="0.61"/>
<path d="M77.0 386.6 L91.6 403.0" stroke="#ada27e" stroke-width="1.0" fill="none" opacity="0.89"/>
<path d="M67.1 401.8 L92.4 431.2" stroke="#b3a883" stroke-width="1.3" fill="none" opacity="0.64"/>
<path d="M120.8 471.6 L132.3 492.7" stroke="#b8ad88" stroke-width="1.3" fill="none" opacity="0.66"/>
<path d="M94.7 422.2 L116.9 452.3" stroke="#b3a883" stroke-width="0.8" fill="none" opacity="0.93"/>
<path d="M46.8 363.1 L76.6 406.4" stroke="#a99f7c" stroke-width="0.8" fill="none" opacity="0.92"/>
<path d="M42.6 367.6 L62.8 393.0" stroke="#a99f7c" stroke-width="1.0" fill="none" opacity="0.51"/>
<path d="M120.4 485.6 L134.1 521.3" stroke="#ada27e" stroke-width="0.8" fill="none" opacity="0.70"/>
<path d="M69.9 369.4 L95.8 405.3" stroke="#a99f7c" stroke-width="1.6" fill="none" opacity="0.56"/>
<path d="M90.2 394.2 L112.0 423.8" stroke="#ada27e" stroke-width="0.8" fill="none" opacity="0.56"/>
<path d="M97.8 436.3 L115.0 457.3" stroke="#ada27e" stroke-width="1.0" fill="none" opacity="0.89"/>
<path d="M38.2 339.4 L63.6 380.0" stroke="#ada27e" stroke-width="1.3" fill="none" opacity="0.92"/>
<path d="M56.2 383.3 L69.7 404.2" stroke="#b5aa85" stroke-width="1.3" fill="none" opacity="0.93"/>
<path d="M41.5 347.4 L57.3 366.1" stroke="#ada27e" stroke-width="0.8" fill="none" opacity="0.50"/>
<path d="M60.1 385.4 L76.7 406.7" stroke="#b5aa85" stroke-width="1.3" fill="none" opacity="0.60"/>
<path d="M113.7 456.2 L140.1 478.7" stroke="#ada27e" stroke-width="1.3" fill="none" opacity="0.73"/>
<path d="M110.8 453.6 L126.0 476.7" stroke="#b3a883" stroke-width="1.0" fill="none" opacity="0.61"/>
<path d="M114.4 469.6 L145.1 493.1" stroke="#ada27e" stroke-width="1.3" fill="none" opacity="0.77"/>
<path d="M101.2 502.2 L131.1 525.0" stroke="#b5aa85" stroke-width="1.3" fill="none" opacity="0.83"/>
<path d="M80.9 415.5 L109.3 453.8" stroke="#ada27e" stroke-width="1.0" fill="none" opacity="0.70"/>
<path d="M26.3 336.9 L60.2 379.9" stroke="#a99f7c" stroke-width="1.6" fill="none" opacity="0.95"/>
<path d="M119.2 462.5 L144.6 486.7" stroke="#b8ad88" stroke-width="1.3" fill="none" opacity="0.75"/>
<path d="M47.2 362.1 L79.6 398.3" stroke="#b8ad88" stroke-width="0.8" fill="none" opacity="0.69"/>
<path d="M78.1 378.1 L92.7 400.3" stroke="#b5aa85" stroke-width="1.3" fill="none" opacity="0.56"/>
<path d="M58.1 380.4 L82.3 418.2" stroke="#b3a883" stroke-width="1.0" fill="none" opacity="0.90"/>
<path d="M117.4 472.6 L130.6 503.5" stroke="#a99f7c" stroke-width="1.0" fill="none" opacity="0.83"/>
<path d="M29.6 342.3 L47.7 367.2" stroke="#ada27e" stroke-width="1.6" fill="none" opacity="0.84"/>
<path d="M114.4 496.0 L123.8 510.0" stroke="#b5aa85" stroke-width="1.0" fill="none" opacity="0.57"/>
<path d="M125.7 448.4 L140.6 465.8" stroke="#ada27e" stroke-width="1.6" fill="none" opacity="0.66"/>
<path d="M130.8 473.3 L138.2 491.3" stroke="#a99f7c" stroke-width="1.6" fill="none" opacity="0.84"/>
<path d="M117.6 470.8 L136.1 482.3" stroke="#b3a883" stroke-width="0.8" fill="none" opacity="0.51"/>
<path d="M121.0 466.6 L136.4 489.5" stroke="#b3a883" stroke-width="1.3" fill="none" opacity="0.51"/>
<path d="M113.3 440.1 L130.6 466.2" stroke="#b8ad88" stroke-width="1.3" fill="none" opacity="0.78"/>
<path d="M117.4 445.6 L131.8 465.3" stroke="#b8ad88" stroke-width="1.6" fill="none" opacity="0.62"/>
<path d="M124.9 461.0 L141.9 496.1" stroke="#b3a883" stroke-width="1.6" fill="none" opacity="0.73"/>
<path d="M101.7 427.7 L134.8 468.9" stroke="#b8ad88" stroke-width="1.0" fill="none" opacity="0.82"/>
<path d="M114.1 451.6 L127.1 470.2" stroke="#ada27e" stroke-width="0.8" fill="none" opacity="0.72"/>
<path d="M112.7 489.6 L130.6 516.7" stroke="#b8ad88" stroke-width="1.6" fill="none" opacity="0.53"/>
<path d="M122.4 438.4 L143.7 468.1" stroke="#b5aa85" stroke-width="1.6" fill="none" opacity="0.52"/>
<path d="M117.0 435.3 L132.3 458.3" stroke="#b5aa85" stroke-width="1.0" fill="none" opacity="0.91"/>
<path d="M109.6 494.2 L129.6 506.9" stroke="#b8ad88" stroke-width="1.0" fill="none" opacity="0.63"/>
<path d="M114.6 481.9 L136.4 514.1" stroke="#b8ad88" stroke-width="1.3" fill="none" opacity="0.94"/>
<path d="M77.0 382.3 L104.4 421.6" stroke="#b3a883" stroke-width="0.8" fill="none" opacity="0.87"/>
<path d="M121.2 434.8 L132.8 452.0" stroke="#b5aa85" stroke-width="1.6" fill="none" opacity="0.86"/>
<path d="M119.3 502.0 L128.8 525.1" stroke="#b3a883" stroke-width="0.8" fill="none" opacity="0.62"/>
<path d="M113.4 438.0 L132.9 461.2" stroke="#b5aa85" stroke-width="1.0" fill="none" opacity="0.84"/>
<path d="M41.6 341.1 L62.5 367.7" stroke="#a99f7c" stroke-width="1.3" fill="none" opacity="0.92"/>
<path d="M118.4 471.2 L146.7 488.6" stroke="#b8ad88" stroke-width="1.0" fill="none" opacity="0.60"/>
<path d="M105.5 507.7 L126.3 533.0" stroke="#b5aa85" stroke-width="1.0" fill="none" opacity="0.51"/>
<path d="M107.7 420.6 L140.9 462.0" stroke="#a99f7c" stroke-width="1.3" fill="none" opacity="0.74"/>
<path d="M107.2 499.6 L126.5 534.4" stroke="#b5aa85" stroke-width="1.0" fill="none" opacity="0.74"/>
<path d="M119.9 479.0 L128.8 493.4" stroke="#ada27e" stroke-width="1.0" fill="none" opacity="0.63"/>
<path d="M109.1 505.2 L127.0 523.8" stroke="#b5aa85" stroke-width="1.3" fill="none" opacity="0.74"/>
<path d="M113.7 492.3 L133.1 508.3" stroke="#a99f7c" stroke-width="0.8" fill="none" opacity="0.69"/>
<path d="M117.7 474.3 L138.8 501.6" stroke="#ada27e" stroke-width="1.3" fill="none" opacity="0.76"/>
<path d="M121.2 469.3 L143.7 486.5" stroke="#a99f7c" stroke-width="1.0" fill="none" opacity="0.58"/>
<path d="M103.2 436.6 L124.9 470.5" stroke="#a99f7c" stroke-width="0.8" fill="none" opacity="0.71"/>
<path d="M109.6 470.0 L140.9 494.2" stroke="#a99f7c" stroke-width="0.8" fill="none" opacity="0.50"/>
<path d="M114.9 483.8 L136.1 498.7" stroke="#ada27e" stroke-width="1.0" fill="none" opacity="0.68"/>
<path d="M93.4 410.6 L120.9 441.5" stroke="#b3a883" stroke-width="1.0" fill="none" opacity="0.52"/>
<path d="M125.1 473.0 L137.4 494.2" stroke="#ada27e" stroke-width="0.8" fill="none" opacity="0.59"/>
<path d="M92.7 420.9 L114.3 450.6" stroke="#a99f7c" stroke-width="1.3" fill="none" opacity="0.64"/>
<path d="M97.3 410.3 L124.0 446.8" stroke="#b3a883" stroke-width="1.3" fill="none" opacity="0.52"/>
<path d="M56.3 373.1 L78.3 400.8" stroke="#b8ad88" stroke-width="1.6" fill="none" opacity="0.64"/>
<path d="M105.2 495.6 L126.8 526.2" stroke="#b8ad88" stroke-width="1.6" fill="none" opacity="0.80"/>
<path d="M111.0 492.2 L135.4 517.5" stroke="#b3a883" stroke-width="1.3" fill="none" opacity="0.60"/>
<path d="M108.2 508.4 L125.6 534.9" stroke="#b5aa85" stroke-width="1.0" fill="none" opacity="0.77"/>
<path d="M51.4 356.6 L85.4 399.2" stroke="#a99f7c" stroke-width="1.6" fill="none" opacity="0.66"/>
<path d="M113.6 462.9 L137.4 482.1" stroke="#b3a883" stroke-width="1.6" fill="none" opacity="0.53"/>
<path d="M110.8 504.3 L122.1 521.0" stroke="#b5aa85" stroke-width="1.3" fill="none" opacity="0.76"/>
<path d="M92.3 428.4 L119.2 462.8" stroke="#a99f7c" stroke-width="1.0" fill="none" opacity="0.84"/>
<path d="M111.6 497.9 L124.1 529.1" stroke="#ada27e" stroke-width="1.3" fill="none" opacity="0.74"/>
<path d="M118.9 466.7 L137.3 500.9" stroke="#b8ad88" stroke-width="1.3" fill="none" opacity="0.91"/>
<path d="M121.2 473.2 L135.6 482.2" stroke="#ada27e" stroke-width="1.6" fill="none" opacity="0.76"/>
<path d="M93.8 427.7 L124.5 462.7" stroke="#b3a883" stroke-width="1.3" fill="none" opacity="0.87"/>
<path d="M123.9 469.8 L134.9 484.4" stroke="#ada27e" stroke-width="1.3" fill="none" opacity="0.68"/>
<path d="M128.3 455.5 L137.9 476.0" stroke="#b3a883" stroke-width="1.0" fill="none" opacity="0.58"/>
<path d="M51.8 379.0 L79.9 410.5" stroke="#a99f7c" stroke-width="1.6" fill="none" opacity="0.53"/>
<path d="M110.2 493.3 L125.8 525.8" stroke="#b5aa85" stroke-width="1.3" fill="none" opacity="0.65"/>
<path d="M99.2 409.8 L128.8 443.0" stroke="#ada27e" stroke-width="1.3" fill="none" opacity="0.77"/>
<path d="M108.3 451.8 L124.2 473.8" stroke="#b5aa85" stroke-width="1.6" fill="none" opacity="0.90"/>
<path d="M65.9 393.0 L96.0 435.6" stroke="#b5aa85" stroke-width="1.3" fill="none" opacity="0.60"/>
<path d="M112.2 460.1 L131.7 479.3" stroke="#a99f7c" stroke-width="0.8" fill="none" opacity="0.84"/>
<path d="M118.0 501.3 L129.0 511.6" stroke="#b8ad88" stroke-width="1.6" fill="none" opacity="0.53"/>
<path d="M48.3 356.6 L78.8 398.7" stroke="#a99f7c" stroke-width="1.0" fill="none" opacity="0.81"/>
<path d="M96.3 443.4 L126.6 479.7" stroke="#b3a883" stroke-width="1.3" fill="none" opacity="0.50"/>
<path d="M106.1 436.4 L118.4 451.8" stroke="#b3a883" stroke-width="1.3" fill="none" opacity="0.58"/>
<path d="M73.8 399.3 L95.4 428.2" stroke="#ada27e" stroke-width="1.6" fill="none" opacity="0.81"/>
<path d="M108.1 486.8 L133.8 512.0" stroke="#b8ad88" stroke-width="1.0" fill="none" opacity="0.63"/>
<path d="M110.5 432.6 L121.9 449.4" stroke="#b5aa85" stroke-width="1.0" fill="none" opacity="0.67"/>
<path d="M114.1 488.9 L130.5 517.1" stroke="#b8ad88" stroke-width="1.0" fill="none" opacity="0.90"/>
<path d="M86.0 403.9 L101.0 427.6" stroke="#ada27e" stroke-width="1.3" fill="none" opacity="0.52"/>
<path d="M105.4 416.7 L141.5 457.9" stroke="#a99f7c" stroke-width="1.0" fill="none" opacity="0.86"/>
<path d="M49.9 354.4 L79.8 400.4" stroke="#ada27e" stroke-width="0.8" fill="none" opacity="0.76"/>
<path d="M59.6 375.6 L88.9 411.1" stroke="#b8ad88" stroke-width="1.3" fill="none" opacity="0.95"/>
<path d="M112.8 502.3 L124.0 519.1" stroke="#a99f7c" stroke-width="1.0" fill="none" opacity="0.84"/>
<path d="M114.8 427.8 L145.5 468.9" stroke="#b3a883" stroke-width="1.3" fill="none" opacity="0.58"/>
<path d="M104.3 419.7 L118.4 435.6" stroke="#b3a883" stroke-width="1.0" fill="none" opacity="0.79"/>
<path d="M83.2 388.8 L105.7 424.7" stroke="#b3a883" stroke-width="1.3" fill="none" opacity="0.79"/>
<path d="M112.4 493.9 L126.3 523.3" stroke="#b5aa85" stroke-width="1.6" fill="none" opacity="0.82"/>
<path d="M67.7 383.9 L96.2 415.9" stroke="#b5aa85" stroke-width="1.0" fill="none" opacity="0.80"/>
<path d="M54.3 351.5 L81.6 386.3" stroke="#a99f7c" stroke-width="1.6" fill="none" opacity="0.92"/>
<path d="M116.3 454.5 L129.2 471.5" stroke="#ada27e" stroke-width="1.3" fill="none" opacity="0.52"/>
<path d="M31.6 341.0 L56.1 374.1" stroke="#ada27e" stroke-width="1.0" fill="none" opacity="0.59"/>
<path d="M29.0 343.7 L56.7 381.3" stroke="#b3a883" stroke-width="1.6" fill="none" opacity="0.83"/>
<path d="M44.7 362.6 L79.8 403.4" stroke="#b3a883" stroke-width="1.6" fill="none" opacity="0.78"/>
<path d="M77.1 386.9 L107.1 420.8" stroke="#b3a883" stroke-width="1.3" fill="none" opacity="0.57"/>
<path d="M39.9 362.5 L56.1 385.2" stroke="#a99f7c" stroke-width="1.0" fill="none" opacity="0.88"/>
<path d="M103.4 509.8 L124.5 538.5" stroke="#b3a883" stroke-width="1.0" fill="none" opacity="0.70"/>
<path d="M109.8 464.8 L134.9 483.5" stroke="#ada27e" stroke-width="1.6" fill="none" opacity="0.68"/>
<path d="M118.0 465.5 L137.5 485.3" stroke="#a99f7c" stroke-width="0.8" fill="none" opacity="0.59"/>
<path d="M126.1 445.1 L142.5 475.4" stroke="#b5aa85" stroke-width="1.3" fill="none" opacity="0.92"/>
<path d="M70.9 368.5 L97.2 408.7" stroke="#a99f7c" stroke-width="0.8" fill="none" opacity="0.62"/>
<path d="M103.4 418.8 L129.3 457.0" stroke="#b3a883" stroke-width="1.6" fill="none" opacity="0.89"/>
<path d="M127.6 449.7 L135.9 471.4" stroke="#b5aa85" stroke-width="1.3" fill="none" opacity="0.95"/>
<path d="M108.4 478.6 L140.6 501.8" stroke="#ada27e" stroke-width="0.8" fill="none" opacity="0.56"/>
<path d="M42.6 335.6 L68.3 366.3" stroke="#b8ad88" stroke-width="1.0" fill="none" opacity="0.62"/>
<path d="M29.8 345.7 L48.4 372.2" stroke="#b5aa85" stroke-width="1.0" fill="none" opacity="0.67"/>
<path d="M108.1 514.8 L120.6 522.0" stroke="#b5aa85" stroke-width="1.3" fill="none" opacity="0.71"/>
<path d="M116.2 498.9 L124.6 512.7" stroke="#b8ad88" stroke-width="1.0" fill="none" opacity="0.83"/>
<path d="M115.0 486.0 L133.8 503.3" stroke="#b5aa85" stroke-width="1.6" fill="none" opacity="0.74"/>
<path d="M111.2 495.2 L124.0 527.8" stroke="#ada27e" stroke-width="1.0" fill="none" opacity="0.81"/>
<path d="M124.4 464.6 L134.2 481.1" stroke="#b5aa85" stroke-width="0.8" fill="none" opacity="0.67"/>
<path d="M23.9 337.8 L51.6 371.5" stroke="#b8ad88" stroke-width="1.3" fill="none" opacity="0.92"/>
<path d="M35.9 362.8 L48.7 378.3" stroke="#b3a883" stroke-width="0.8" fill="none" opacity="0.57"/>
<path d="M107.3 440.8 L130.0 474.8" stroke="#a99f7c" stroke-width="1.3" fill="none" opacity="0.80"/>
<path d="M121.9 443.7 L145.3 475.0" stroke="#ada27e" stroke-width="1.3" fill="none" opacity="0.63"/>
<path d="M104.0 434.8 L128.1 461.7" stroke="#b5aa85" stroke-width="1.6" fill="none" opacity="0.77"/>
<path d="M116.8 489.6 L130.2 506.4" stroke="#b5aa85" stroke-width="0.8" fill="none" opacity="0.95"/>
<path d="M93.5 424.4 L118.7 456.9" stroke="#b8ad88" stroke-width="1.6" fill="none" opacity="0.81"/>
<path d="M115.9 446.0 L129.4 465.2" stroke="#b3a883" stroke-width="1.6" fill="none" opacity="0.57"/>
<path d="M120.5 462.7 L137.1 474.7" stroke="#b5aa85" stroke-width="1.3" fill="none" opacity="0.67"/>
<path d="M92.4 429.5 L104.9 444.2" stroke="#b3a883" stroke-width="1.0" fill="none" opacity="0.55"/>
<path d="M52.8 378.7 L68.3 398.0" stroke="#a99f7c" stroke-width="1.3" fill="none" opacity="0.92"/>
<path d="M111.6 453.5 L140.5 472.3" stroke="#b5aa85" stroke-width="1.6" fill="none" opacity="0.68"/>
<path d="M88.6 411.9 L122.2 451.6" stroke="#b5aa85" stroke-width="1.6" fill="none" opacity="0.59"/>
<path d="M50.3 375.2 L65.4 395.0" stroke="#a99f7c" stroke-width="1.6" fill="none" opacity="0.91"/>
<path d="M46.1 355.0 L61.5 378.2" stroke="#ada27e" stroke-width="1.3" fill="none" opacity="0.61"/>
<path d="M109.1 487.4 L131.2 517.7" stroke="#b3a883" stroke-width="1.3" fill="none" opacity="0.80"/>
<path d="M86.2 421.6 L101.6 439.2" stroke="#b8ad88" stroke-width="1.6" fill="none" opacity="0.88"/>
<path d="M124.2 473.9 L143.5 488.5" stroke="#ada27e" stroke-width="1.0" fill="none" opacity="0.56"/>
<path d="M117.3 487.1 L132.2 513.8" stroke="#b8ad88" stroke-width="1.6" fill="none" opacity="0.61"/>
<path d="M101.6 455.6 L140.4 482.7" stroke="#b8ad88" stroke-width="1.3" fill="none" opacity="0.75"/>
<path d="M104.2 433.7 L128.3 470.0" stroke="#a99f7c" stroke-width="1.3" fill="none" opacity="0.67"/>
<path d="M112.0 493.4 L125.9 526.1" stroke="#b8ad88" stroke-width="0.8" fill="none" opacity="0.81"/>
<path d="M119.3 498.8 L132.0 509.5" stroke="#b3a883" stroke-width="0.8" fill="none" opacity="0.89"/>
<path d="M121.0 431.3 L145.9 478.3" stroke="#b5aa85" stroke-width="1.3" fill="none" opacity="0.83"/>
<path d="M32.6 336.3 L54.9 369.1" stroke="#a99f7c" stroke-width="0.8" fill="none" opacity="0.69"/>
<path d="M55.0 373.1 L82.3 403.6" stroke="#ada27e" stroke-width="1.6" fill="none" opacity="0.64"/>
<path d="M30.5 351.8 L52.7 378.8" stroke="#ada27e" stroke-width="0.8" fill="none" opacity="0.56"/>
<path d="M39.7 361.5 L65.4 395.7" stroke="#ada27e" stroke-width="1.0" fill="none" opacity="0.63"/>
<path d="M115.3 434.5 L142.9 478.0" stroke="#a99f7c" stroke-width="1.6" fill="none" opacity="0.56"/>
<path d="M116.5 454.8 L132.1 474.2" stroke="#ada27e" stroke-width="1.6" fill="none" opacity="0.54"/>
<path d="M77.8 382.3 L104.6 424.7" stroke="#a99f7c" stroke-width="1.6" fill="none" opacity="0.56"/>
<path d="M16.5 363 C 15 384, 9 405, 0 424 L 0 409 C 3 400, 6 390, 8.5 376 C 11 370, 14 366, 16.5 363 Z" fill="#cb998d" opacity="0.95"/>
<path d="M16.5 363 C 15 384, 9 405, 0 424" fill="none" stroke="#7d7058" stroke-width="0.8" opacity="0.7"/>
    <line x1="123.4" y1="400" x2="130.5" y2="550" stroke="#74e8ad" stroke-width="1.2" opacity="0.45"/>
    <rect x="202" y="6" width="129" height="544" fill="#bdbdbd" opacity="0.72"/>
    <rect x="202" y="6" width="3.5" height="544" fill="#b5b5b5" opacity="0.5"/>
  </svg>
</div>
<div class="a" style="left:331px;top:0;width:5px;height:550px;background:#2e2e2e"></div>
<div class="a" style="left:336px;top:0;width:7px;height:550px;background:#3a3a3a"></div>

<div class="a" style="left:343px;top:1px;width:450px;height:19px;background:#3c3c3c"></div>
<div class="a" style="left:346px;top:3px;width:64px;height:16px;background:#3b3b3b;border:1px solid #333;border-radius:2px 2px 0 0"></div>
<div class="t" style="left:357px;top:6px;color:#a2a2a2">pPlane1</div>
<div class="a" style="left:410px;top:2px;width:96px;height:20px;background:#444;border-radius:2px 2px 0 0"></div>
<div class="t" style="left:422px;top:6px;color:#e4e4e4">pPlaneShape1</div>
<div class="a" style="left:507px;top:3px;width:60px;height:16px;background:#3b3b3b;border:1px solid #333;border-radius:2px 2px 0 0"></div>
<div class="t" style="left:520px;top:6px;color:#a2a2a2">bg_mat</div>

<div class="t" style="left:460px;top:56px;color:#c4c4c4">mesh:</div>
<div class="a" style="left:496px;top:50px;width:154px;height:21px;background:#2b2b2b;border-radius:2px"></div>
<div class="t" style="left:501px;top:56px;color:#d6d6d6">pPlaneShape1</div>
<svg class="a" style="left:660px;top:40px" width="24" height="42" viewBox="0 0 24 42">
  <path d="M5.5 5.6 V3.3 H19.5 V15.3 H5.5 V12.6" fill="none" stroke="#c2c2c2" stroke-width="1"/>
  <path d="M3 5.4 L9.6 9.1 L3 12.8 Z" fill="#c2c2c2"/>
  <path d="M17.5 27.9 V25.3 H3.5 V37.3 H17.5 V34.5" fill="none" stroke="#c2c2c2" stroke-width="1"/>
  <path d="M14 27.7 L20.2 31.2 L14 34.7 Z" fill="#c2c2c2"/>
</svg>
<div class="a" style="left:690px;top:29px;width:71px;height:20px;background:#5a5a5a;border:1px solid #515151;border-radius:1px"></div>
<div class="t" style="left:711px;top:34px;color:#e8e8e8">Focus</div>
<div class="a" style="left:690px;top:51px;width:71px;height:20px;background:#4a4a4a;border:1px solid #424242;border-radius:1px"></div>
<div class="t" style="left:707px;top:56px;color:#747474">Presets</div>
<div class="a" style="left:690px;top:73px;width:36px;height:20px;background:#5a5a5a;border:1px solid #515151;border-radius:1px"></div>
<div class="t" style="left:694px;top:78px;color:#e8e8e8">Show</div>
<div class="a" style="left:728px;top:73px;width:35px;height:20px;background:#5a5a5a;border:1px solid #515151;border-radius:1px"></div>
<div class="t" style="left:733px;top:78px;color:#e8e8e8">Hide</div>
<div class="a" style="left:345px;top:104px;width:434px;height:446px;background:#414141"></div>
<div class="hdr" style="top:110px"><div class="tri"></div><div class="lab" style="letter-spacing:-0.15px">Tessellation Attributes</div></div>
<div class="hdr" style="top:132px"><div class="tri"></div><div class="lab" style="letter-spacing:0px">Mesh Component Display</div></div>
<div class="hdr" style="top:154px"><div class="tri"></div><div class="lab" style="letter-spacing:0px">Mesh Controls</div></div>
<div class="hdr" style="top:176px"><div class="tri"></div><div class="lab" style="letter-spacing:0px">Tangent Space</div></div>
<div class="hdr" style="top:198px"><div class="tri"></div><div class="lab" style="letter-spacing:0px">Smooth Mesh</div></div>
<div class="hdr" style="top:220px"><div class="tri"></div><div class="lab" style="letter-spacing:0px">Displacement Map</div></div>
<div class="hdr" style="top:242px"><div class="tri dn"></div><div class="lab" style="letter-spacing:-0.25px">Render Stats</div></div>
<div class="a" style="left:348px;top:262px;width:3px;height:288px;background:#414141"></div>
<div class="a" style="left:351px;top:262px;width:425px;height:288px;background:#484848"></div>
<div class="a" style="left:353px;top:454px;width:423px;height:2px;background:#424242"></div>
<div class="cb" style="top:267px"><svg width="13" height="13" viewBox="0 0 13 13"><path d="M2.4 6.6 L5.2 9.7 L10.9 2.6" fill="none" stroke="#f0f0f0" stroke-width="2.1"/></svg></div><div class="cl" style="top:268px;color:#c6c6c6;letter-spacing:0px">Casts Shadows</div>
<div class="cb" style="top:286px"><svg width="13" height="13" viewBox="0 0 13 13"><path d="M2.4 6.6 L5.2 9.7 L10.9 2.6" fill="none" stroke="#f0f0f0" stroke-width="2.1"/></svg></div><div class="cl" style="top:287px;color:#c6c6c6;letter-spacing:-0.05px">Receive Shadows</div>
<div class="cb" style="top:305px"></div><div class="cl" style="top:306px;color:#c6c6c6;letter-spacing:0.6px">Hold-Out</div>
<div class="cb" style="top:324px"><svg width="13" height="13" viewBox="0 0 13 13"><path d="M2.4 6.6 L5.2 9.7 L10.9 2.6" fill="none" stroke="#f0f0f0" stroke-width="2.1"/></svg></div><div class="cl" style="top:325px;color:#c6c6c6;letter-spacing:0.55px">Motion Blur</div>
<div class="cb" style="top:343px"></div><div class="cl" style="top:344px;color:#c6c6c6;letter-spacing:0.17px">Primary Visibility</div>
<div class="cb" style="top:362px"><svg width="13" height="13" viewBox="0 0 13 13"><path d="M2.4 6.6 L5.2 9.7 L10.9 2.6" fill="none" stroke="#f0f0f0" stroke-width="2.1"/></svg></div><div class="cl" style="top:363px;color:#c6c6c6;letter-spacing:0.3px">Smooth Shading</div>
<div class="cb" style="top:381px"><svg width="13" height="13" viewBox="0 0 13 13"><path d="M2.4 6.6 L5.2 9.7 L10.9 2.6" fill="none" stroke="#f0f0f0" stroke-width="2.1"/></svg></div><div class="cl" style="top:382px;color:#c6c6c6;letter-spacing:0.2px">Visible In Reflections</div>
<div class="cb" style="top:400px"><svg width="13" height="13" viewBox="0 0 13 13"><path d="M2.4 6.6 L5.2 9.7 L10.9 2.6" fill="none" stroke="#f0f0f0" stroke-width="2.1"/></svg></div><div class="cl" style="top:401px;color:#c6c6c6;letter-spacing:0.2px">Visible In Refractions</div>
<div class="cb" style="top:419px"><svg width="13" height="13" viewBox="0 0 13 13"><path d="M2.4 6.6 L5.2 9.7 L10.9 2.6" fill="none" stroke="#f0f0f0" stroke-width="2.1"/></svg></div><div class="cl" style="top:420px;color:#c6c6c6;letter-spacing:0.33px">Double Sided</div>
<div class="cb" style="top:438px"></div><div class="cl" style="top:439px;color:#6a6a6a;letter-spacing:0.45px">Opposite</div>
<div class="a" style="left:499px;top:339px;width:112px;height:21px;border:4.5px solid #f80c0c;border-radius:3px"></div>
<div class="cb" style="top:460px"></div><div class="cl" style="top:461px;letter-spacing:0.25px">Geometry Anti-aliasing Override</div>
<div class="cb" style="top:500px"></div><div class="cl" style="top:501px;letter-spacing:0.1px">Shading Samples Override</div>
<div class="t" style="right:355px;top:480px;color:#8a8a8a;letter-spacing:0.17px">Antialiasing Level</div><div class="a" style="left:503px;top:478px;width:68px;height:17px;background:#3f3f3f;border-radius:1px"></div><div class="t" style="left:508px;top:481px;color:#6c6c6c">1</div><div class="a" style="left:574px;top:483px;width:193px;height:4px;background:#3a3a3a;border-radius:2px"></div><div class="a" style="left:576px;top:479px;width:7px;height:13px;background:#6a6a6a;border-radius:2px"></div>
<div class="t" style="right:355px;top:521px;color:#8a8a8a;letter-spacing:0.17px">Shading Samples</div><div class="a" style="left:503px;top:519px;width:68px;height:17px;background:#3f3f3f;border-radius:1px"></div><div class="t" style="left:508px;top:522px;color:#6c6c6c">1</div><div class="a" style="left:574px;top:524px;width:193px;height:4px;background:#3a3a3a;border-radius:2px"></div><div class="a" style="left:576px;top:520px;width:7px;height:13px;background:#6a6a6a;border-radius:2px"></div>
<div class="t" style="right:355px;top:542px;color:#8a8a8a;letter-spacing:0.17px">Max Shading Samples</div><div class="a" style="left:503px;top:540px;width:68px;height:17px;background:#3f3f3f;border-radius:1px"></div><div class="t" style="left:508px;top:543px;color:#6c6c6c">1</div><div class="a" style="left:574px;top:545px;width:193px;height:4px;background:#3a3a3a;border-radius:2px"></div><div class="a" style="left:576px;top:541px;width:7px;height:13px;background:#6a6a6a;border-radius:2px"></div>

<div class="a" style="left:789px;top:20px;width:11px;height:530px;background:#444"></div>
<div class="a" style="left:776px;top:104px;width:3px;height:446px;background:#3d3d3d"></div>
<div class="a" style="left:777px;top:105px;width:13px;height:14px;background:#393939"></div>
<svg class="a" style="left:778px;top:108px" width="11" height="8"><path d="M0.5 7 L5.5 2 L10.5 7 Z" fill="#d8d8d8"/></svg>
<div class="a" style="left:779px;top:119px;width:10px;height:431px;background:#595959"></div>

<div class="a" style="left:800px;top:0;width:15px;height:550px;background:#3a3a3a"></div>
<div class="a" style="left:815px;top:0;width:35px;height:550px;background:#2d2d2d"></div>
<div class="a" style="left:815px;top:0;width:15px;height:421px;background:#393939;border-right:2px solid #202020;border-bottom:1.5px solid #1f1f1f;border-radius:0 0 6px 0"></div>
<div class="nt" style="top:103px;height:17px"></div><div class="nt" style="top:124px;height:16px"></div><div class="nt" style="top:162px;height:18px"></div><div class="nt" style="top:182px;height:17px"></div><div class="nt" style="top:222px;height:17px"></div><div class="nt" style="top:241px;height:17px"></div><div class="nt" style="top:261px;height:18px"></div><div class="nt" style="top:281px;height:18px"></div>
<div class="a" style="left:800px;top:122px;width:15px;height:1px;background:#2e2e2e"></div>
<div class="a" style="left:815px;top:318px;width:13px;height:1px;background:#333"></div>
<div class="a" style="left:815px;top:340px;width:13px;height:1px;background:#333"></div>
<div class="a" style="left:815px;top:357px;width:13px;height:1px;background:#333"></div>
<div class="a" style="left:815px;top:378px;width:13px;height:1px;background:#333"></div>
<div class="a" style="left:815px;top:397px;width:13px;height:1px;background:#333"></div>
<div class="a" style="left:799px;top:234px;width:16px;height:103px;background:#454545"></div>
<div class="a" style="left:800px;top:428px;width:15px;height:1px;background:#2e2e2e"></div>
<div class="a" style="left:800px;top:504px;width:15px;height:1px;background:#2e2e2e"></div>
<div class="vt" style="top:-3px;height:122px;letter-spacing:0.9px">nel Box / Layer Editor</div>
<div class="vt" style="top:135px;height:95px;letter-spacing:1px">Modeling Toolkit</div>
<div class="vt" style="top:246px;height:88px;letter-spacing:0.9px;color:#eaeaea">Attribute Editor</div>
<div class="vt" style="top:350px;height:75px;letter-spacing:0.75px">Tool Settings</div>
<div class="vt" style="top:439px;height:64px;letter-spacing:1px">UV Toolkit</div>
<div class="vt" style="top:515px;height:35px;letter-spacing:1px">XGen</div>
</body></html>
